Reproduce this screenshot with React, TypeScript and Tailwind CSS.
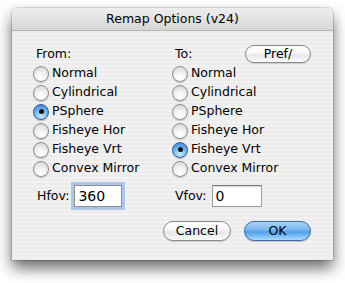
import React from "react";

const font = "font-['DejaVu_Sans',sans-serif]";

function Radio({ checked }: { checked?: boolean }) {
  if (checked) {
    return (
      <span className="flex h-[16px] w-[16px] shrink-0 items-center justify-center rounded-full border border-[#3a5f94] bg-[radial-gradient(circle_at_50%_80%,#c8ecff_0%,#79bdf2_45%,#2e72cc_100%)] shadow-[0_1px_1px_rgba(0,0,0,0.25)]">
        <span className="h-[5px] w-[5px] rounded-full bg-[#141414]" />
      </span>
    );
  }
  return (
    <span className="h-[16px] w-[16px] shrink-0 rounded-full border border-[#8e8e8e] bg-[radial-gradient(circle_at_50%_80%,#ffffff_0%,#f3f3f3_40%,#cfcfcf_100%)] shadow-[0_1px_1px_rgba(0,0,0,0.2)]" />
  );
}

function RadioRow({ label, checked }: { label: string; checked?: boolean }) {
  return (
    <div className="flex h-[19px] items-center gap-[3px]">
      <Radio checked={checked} />
      <span className="text-[12.5px] leading-none text-black">{label}</span>
    </div>
  );
}

const options = ["Normal", "Cylindrical", "PSphere", "Fisheye Hor", "Fisheye Vrt", "Convex Mirror"];

export default function App() {
  return (
    <div className={`min-h-[283px] w-[345px] bg-white pl-[12px] pt-[8px] ${font}`}>
      <div className="flex h-[252px] w-[321px] flex-col overflow-hidden rounded-t-[5px] shadow-[0_0_0_1px_rgba(0,0,0,0.12),0_8px_15px_rgba(0,0,0,0.6)]">
        <div className="flex h-[23px] shrink-0 items-center justify-center border-b border-[#b4b4b4] bg-[linear-gradient(to_bottom,#eeeeee,#d6d6d6)] text-[12.5px] text-black">
          Remap Options (v24)
        </div>
        <div className="flex flex-1 flex-col bg-[repeating-linear-gradient(to_bottom,#ececec_0px,#ececec_2px,#f1f1f1_2px,#f1f1f1_4px)] pl-[21px] pr-[22px] pt-[13px]">
          <div className="flex">
            <div className="flex w-[139px] flex-col">
              <div className="flex h-[20px] items-center pl-[3px] text-[12.5px] text-black">From:</div>
              {options.map((o) => (
                <RadioRow key={o} label={o} checked={o === "PSphere"} />
              ))}
            </div>
            <div className="flex w-[139px] flex-col">
              <div className="flex h-[20px] items-center justify-between pl-[3px]">
                <span className="text-[12.5px] text-black">To:</span>
                <button className="flex h-[18px] w-[66px] items-center justify-center rounded-full border border-[#8a8a8a] bg-[linear-gradient(to_bottom,#ffffff_0%,#f7f7f7_45%,#e6e6e6_55%,#fbfbfb_100%)] text-[12.5px] leading-none text-black shadow-[0_1px_1px_rgba(0,0,0,0.15)]">
                  Pref/
                </button>
              </div>
              {options.map((o) => (
                <RadioRow key={o} label={o} checked={o === "Fisheye Vrt"} />
              ))}
            </div>
          </div>
          <div className="mt-[7px] flex h-[22px]">
            <div className="flex w-[139px] items-center gap-[5px] pl-[4px]">
              <span className="text-[12.5px] text-black">Hfov:</span>
              <div className="flex h-[22px] w-[48px] items-center border border-[#8f8f8f] bg-white pl-[3px] text-[14px] text-black shadow-[0_0_0_3px_rgba(120,165,225,0.55)]">
                360
              </div>
            </div>
            <div className="flex w-[139px] items-center gap-[5px] pl-[3px]">
              <span className="text-[12.5px] text-black">Vfov:</span>
              <div className="flex h-[22px] w-[50px] items-center border border-[#9a9a9a] border-t-[#7c7c7c] bg-white pl-[3px] text-[14px] text-black shadow-[inset_0_1px_1px_rgba(0,0,0,0.15)]">
                0
              </div>
            </div>
          </div>
          <div className="mt-[14px] flex justify-end gap-[13px]">
            <button className="flex h-[20px] w-[68px] items-center justify-center rounded-full border border-[#8a8a8a] bg-[linear-gradient(to_bottom,#ffffff_0%,#f7f7f7_45%,#e6e6e6_55%,#fbfbfb_100%)] text-[12.5px] leading-none text-black shadow-[0_1px_1px_rgba(0,0,0,0.15)]">
              Cancel
            </button>
            <button className="flex h-[20px] w-[67px] items-center justify-center rounded-full border border-[#3f6aa8] bg-[linear-gradient(to_bottom,#a8d2f6_0%,#78b6ee_45%,#4f9de8_55%,#a6dcff_100%)] text-[12.5px] leading-none text-black shadow-[0_1px_1px_rgba(0,0,0,0.2)]">
              OK
            </button>
          </div>
        </div>
      </div>
    </div>
  );
}
